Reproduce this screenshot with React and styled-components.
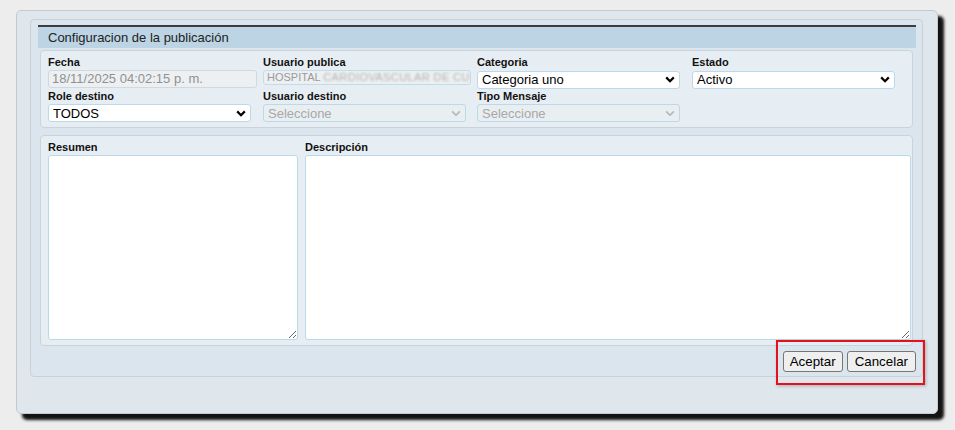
import React from 'react';
import styled, { createGlobalStyle } from 'styled-components';

const GlobalStyle = createGlobalStyle`
  html, body {
    margin: 0;
    padding: 0;
    background: #ededed;
    font-family: "Liberation Sans", Arial, sans-serif;
  }
`;

const Page = styled.div`
  padding: 10px 0 0 16px;
  width: 955px;
  height: 430px;
  box-sizing: border-box;
`;

const Dialog = styled.div`
  width: 922px;
  height: 404px;
  box-sizing: border-box;
  background: #dfe6ec;
  border: 1px solid #c6c9cc;
  border-radius: 5px;
  box-shadow: 6px 6px 3px rgba(0, 0, 0, 0.92);
  padding: 8px 14px 0 13px;
`;

const Panel = styled.div`
  width: 893px;
  height: 358px;
  box-sizing: border-box;
  background: #dae5ee;
  border: 1px solid #c9d0d6;
  border-radius: 4px;
  padding: 5px 6px 0 7px;
`;

const TitleBar = styled.div`
  height: 21px;
  border-top: 2px solid #3d3d3d;
  background: #bdd4e4;
  color: #222;
  font-size: 13px;
  line-height: 21px;
  padding-left: 10px;
`;

const Fieldset = styled.div`
  margin: ${({ top }) => top}px 3px 0 2px;
  background: #e7eef3;
  border: 1px solid #cbd3da;
  border-radius: 4px;
  padding: 5px ${({ right }) => right}px 5px 7px;
`;

const FieldGrid = styled.div`
  display: grid;
  grid-template-columns: 215px 214px 215px 215px;
  row-gap: 1px;
`;

const TextGrid = styled.div`
  display: grid;
  grid-template-columns: 250px 606px;
  column-gap: 7px;
`;

const Field = styled.div`
  display: flex;
  flex-direction: column;
`;

const Label = styled.label`
  font-size: 11px;
  font-weight: bold;
  color: #111;
  line-height: 13px;
  height: 13px;
  margin-bottom: 1px;
`;

const TextInput = styled.div`
  width: ${({ w }) => w}px;
  height: ${({ h }) => h}px;
  box-sizing: border-box;
  border: 1px solid ${({ small }) => (small ? '#c3dcec' : '#d2d9de')};
  border-radius: 3px;
  background: #edf0f2;
  color: ${({ small }) => (small ? '#9a9a9a' : '#909090')};
  font-size: ${({ small }) => (small ? 11 : 13)}px;
  line-height: ${({ h }) => h - 2}px;
  padding-left: 3px;
  white-space: nowrap;
  overflow: hidden;
`;

const Blurred = styled.span`
  filter: blur(1.2px);
  color: #b2b2b2;
  letter-spacing: 0.4px;
`;

const SelectWrap = styled.div`
  position: relative;
  width: ${({ w }) => w}px;
`;

const Select = styled.select`
  appearance: none;
  -webkit-appearance: none;
  width: 100%;
  height: 18px;
  box-sizing: border-box;
  border: 1px solid #bcd9ec;
  border-radius: 3px;
  background: ${({ disabled }) => (disabled ? '#e9eef1' : '#fff')};
  color: ${({ disabled }) => (disabled ? '#a8a8a8' : '#000')};
  font-family: "Liberation Sans", Arial, sans-serif;
  font-size: 13px;
  padding: 0 0 0 4px;
  margin: 0;
  outline: none;
  opacity: 1;
`;

const Chevron = styled.svg`
  position: absolute;
  right: 5px;
  top: 6px;
  width: 10px;
  height: 7px;
  pointer-events: none;
`;

const TextArea = styled.textarea`
  display: block;
  width: 100%;
  height: 185px;
  box-sizing: border-box;
  border: 1px solid #bcd9ec;
  border-radius: 3px;
  background: #fff;
  margin: 0;
  outline: none;
`;

const ButtonBar = styled.div`
  display: flex;
  justify-content: flex-end;
  margin-top: 5px;
  margin-right: 0;
`;

const Highlight = styled.div`
  position: relative;
  display: flex;
  gap: 4px;

  &::after {
    content: '';
    position: absolute;
    top: -11px;
    bottom: -13px;
    left: -7px;
    right: -9px;
    border: 2px solid #e4121b;
    box-shadow: 1px 1px 3px rgba(0, 0, 0, 0.25);
    pointer-events: none;
  }
`;

const Button = styled.button`
  height: 21px;
  padding: 0 ${({ wide }) => (wide ? 7 : 6)}px;
  border: 1px solid #767676;
  border-radius: 3px;
  background: #efefef;
  color: #000;
  font-family: "Liberation Sans", Arial, sans-serif;
  font-size: 13.33px;
  cursor: pointer;
`;

const ChevronIcon = ({ disabled }) => (
  <Chevron viewBox="0 0 10 7">
    <path
      d="M1.2 1.4 L5 5.2 L8.8 1.4"
      fill="none"
      stroke={disabled ? '#b4b4b4' : '#000'}
      strokeWidth={disabled ? 1.5 : 2.2}
    />
  </Chevron>
);

const SelectField = ({ label, value, options, w = 203, disabled }) => (
  <Field>
    <Label>{label}</Label>
    <SelectWrap w={w}>
      <Select disabled={disabled} defaultValue={value}>
        {options.map((o) => (
          <option key={o}>{o}</option>
        ))}
      </Select>
      <ChevronIcon disabled={disabled} />
    </SelectWrap>
  </Field>
);

export default function App() {
  return (
    <>
      <GlobalStyle />
      <Page>
        <Dialog>
          <Panel>
            <TitleBar>Configuracion de la publicación</TitleBar>

            <Fieldset top={2} right={7}>
              <FieldGrid>
                <Field>
                  <Label>Fecha</Label>
                  <TextInput w={209} h={18}>18/11/2025 04:02:15 p. m.</TextInput>
                </Field>
                <Field>
                  <Label>Usuario publica</Label>
                  <TextInput w={208} h={15} small>
                    HOSPITAL <Blurred>CARDIOVASCULAR DE CU</Blurred>
                  </TextInput>
                </Field>
                <SelectField label="Categoria" value="Categoria uno" options={['Categoria uno', 'Categoria dos']} />
                <SelectField label="Estado" value="Activo" options={['Activo', 'Inactivo']} />

                <SelectField label="Role destino" value="TODOS" options={['TODOS']} />
                <SelectField label="Usuario destino" value="Seleccione" options={['Seleccione']} disabled />
                <SelectField label="Tipo Mensaje" value="Seleccione" options={['Seleccione']} disabled />
              </FieldGrid>
            </Fieldset>

            <Fieldset top={7} right={1}>
              <TextGrid>
                <Field>
                  <Label>Resumen</Label>
                  <TextArea />
                </Field>
                <Field>
                  <Label>Descripción</Label>
                  <TextArea />
                </Field>
              </TextGrid>
            </Fieldset>

            <ButtonBar>
              <Highlight>
                <Button>Aceptar</Button>
                <Button wide>Cancelar</Button>
              </Highlight>
            </ButtonBar>
          </Panel>
        </Dialog>
      </Page>
    </>
  );
}
